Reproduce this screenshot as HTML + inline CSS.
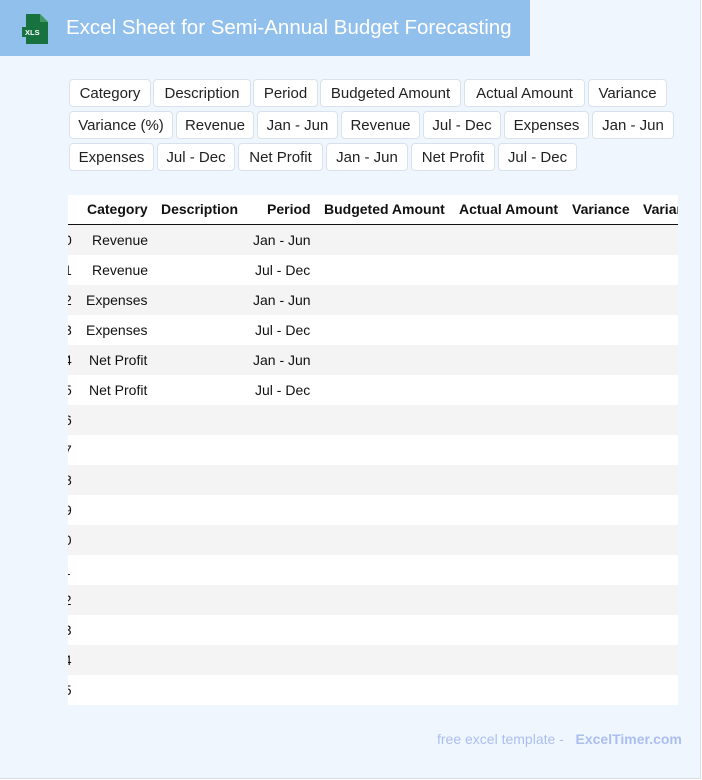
<!DOCTYPE html>
<html><head><style>
*{margin:0;padding:0;box-sizing:border-box}
body{width:702px;height:780px;background:#fff;position:relative;overflow:hidden;font-family:"Liberation Sans",sans-serif}
.page{position:absolute;left:0;top:0;width:701px;height:779px;background:#f0f6fe;border-right:1px solid #d8dde3;border-bottom:1px solid #d8dde3}
.hdr{position:absolute;left:0;top:0;width:530px;height:56px;background:#92c0ec}
.title{position:absolute;left:66px;top:16px;color:#fff;font-size:20.5px;white-space:nowrap}
.chip{position:absolute;height:28px;background:#fff;border:1px solid #d9e2ec;border-radius:4px;font-size:15px;color:#222;text-align:center;line-height:27px;white-space:nowrap}
.tbl{position:absolute;left:68px;top:195px;width:610px;height:510px;background:#fff;overflow:hidden}
.row{position:absolute;left:0;width:610px;height:30px}
.t{position:absolute;font-size:14px;color:#111;white-space:nowrap;line-height:30px}
.b{font-weight:bold}
.foot{position:absolute;left:437px;top:731px;font-size:14px;color:#aabff0;white-space:nowrap}
</style></head><body>
<div class="page">
<div class="hdr">
<svg style="position:absolute;left:20px;top:14px" width="30" height="30" viewBox="0 0 30 30">
<path d="M6 0H20L28 8V30H6Z" fill="#17723f"/><path d="M20 0V8H28Z" fill="#3f9a62"/>
<rect x="2" y="13" width="20" height="10" fill="#17723f"/>
<text x="5" y="21" font-family="Liberation Sans" font-size="7.5" fill="#fff" font-weight="bold">XLS</text>
</svg>
<div class="title">Excel Sheet for Semi-Annual Budget Forecasting</div>
</div>

<div class="chip" style="left:69px;top:79px;width:82px">Category</div>
<div class="chip" style="left:153px;top:79px;width:98px">Description</div>
<div class="chip" style="left:253px;top:79px;width:65px">Period</div>
<div class="chip" style="left:320px;top:79px;width:141px">Budgeted Amount</div>
<div class="chip" style="left:464px;top:79px;width:121px">Actual Amount</div>
<div class="chip" style="left:588px;top:79px;width:79px">Variance</div>

<div class="chip" style="left:69px;top:111px;width:104px">Variance (%)</div>
<div class="chip" style="left:176px;top:111px;width:78px">Revenue</div>
<div class="chip" style="left:257px;top:111px;width:81px">Jan - Jun</div>
<div class="chip" style="left:341px;top:111px;width:79px">Revenue</div>
<div class="chip" style="left:423px;top:111px;width:78px">Jul - Dec</div>
<div class="chip" style="left:504px;top:111px;width:85px">Expenses</div>
<div class="chip" style="left:592px;top:111px;width:82px">Jan - Jun</div>

<div class="chip" style="left:69px;top:143px;width:85px">Expenses</div>
<div class="chip" style="left:157px;top:143px;width:78px">Jul - Dec</div>
<div class="chip" style="left:238px;top:143px;width:85px">Net Profit</div>
<div class="chip" style="left:326px;top:143px;width:82px">Jan - Jun</div>
<div class="chip" style="left:411px;top:143px;width:84px">Net Profit</div>
<div class="chip" style="left:498px;top:143px;width:79px">Jul - Dec</div>

<div class="tbl">
<div class="row" style="top:0;border-bottom:1px solid #111;height:30px">
<span class="t b" style="left:19px;top:-1px">Category</span>
<span class="t b" style="left:93px;top:-1px">Description</span>
<span class="t b" style="left:199px;top:-1px">Period</span>
<span class="t b" style="left:256px;top:-1px">Budgeted Amount</span>
<span class="t b" style="left:391px;top:-1px">Actual Amount</span>
<span class="t b" style="left:504px;top:-1px">Variance</span>
<span class="t b" style="left:575px;top:-1px">Variance (%)</span>
</div>
<div class="row" style="top:30px;background:#f4f4f4"><span class="t" style="left:-4px">0</span><span class="t" style="left:24px">Revenue</span><span class="t" style="left:185px">Jan - Jun</span></div>
<div class="row" style="top:60px"><span class="t" style="left:-4px">1</span><span class="t" style="left:24px">Revenue</span><span class="t" style="left:187px">Jul - Dec</span></div>
<div class="row" style="top:90px;background:#f4f4f4"><span class="t" style="left:-4px">2</span><span class="t" style="left:18px">Expenses</span><span class="t" style="left:185px">Jan - Jun</span></div>
<div class="row" style="top:120px"><span class="t" style="left:-4px">3</span><span class="t" style="left:18px">Expenses</span><span class="t" style="left:187px">Jul - Dec</span></div>
<div class="row" style="top:150px;background:#f4f4f4"><span class="t" style="left:-4px">4</span><span class="t" style="left:21px">Net Profit</span><span class="t" style="left:185px">Jan - Jun</span></div>
<div class="row" style="top:180px"><span class="t" style="left:-4px">5</span><span class="t" style="left:21px">Net Profit</span><span class="t" style="left:187px">Jul - Dec</span></div>
<div class="row" style="top:210px;background:#f4f4f4"><span class="t" style="left:-4px">6</span></div>
<div class="row" style="top:240px"><span class="t" style="left:-4px">7</span></div>
<div class="row" style="top:270px;background:#f4f4f4"><span class="t" style="left:-4px">8</span></div>
<div class="row" style="top:300px"><span class="t" style="left:-4px">9</span></div>
<div class="row" style="top:330px;background:#f4f4f4"><span class="t" style="left:-12px">10</span></div>
<div class="row" style="top:360px"><span class="t" style="left:-12px">11</span></div>
<div class="row" style="top:390px;background:#f4f4f4"><span class="t" style="left:-12px">12</span></div>
<div class="row" style="top:420px"><span class="t" style="left:-12px">13</span></div>
<div class="row" style="top:450px;background:#f4f4f4"><span class="t" style="left:-12px">14</span></div>
<div class="row" style="top:480px"><span class="t" style="left:-12px">15</span></div>
</div>

<div class="foot">free excel template - &nbsp;&nbsp;<b>ExcelTimer.com</b></div>
</div>
</body></html>
